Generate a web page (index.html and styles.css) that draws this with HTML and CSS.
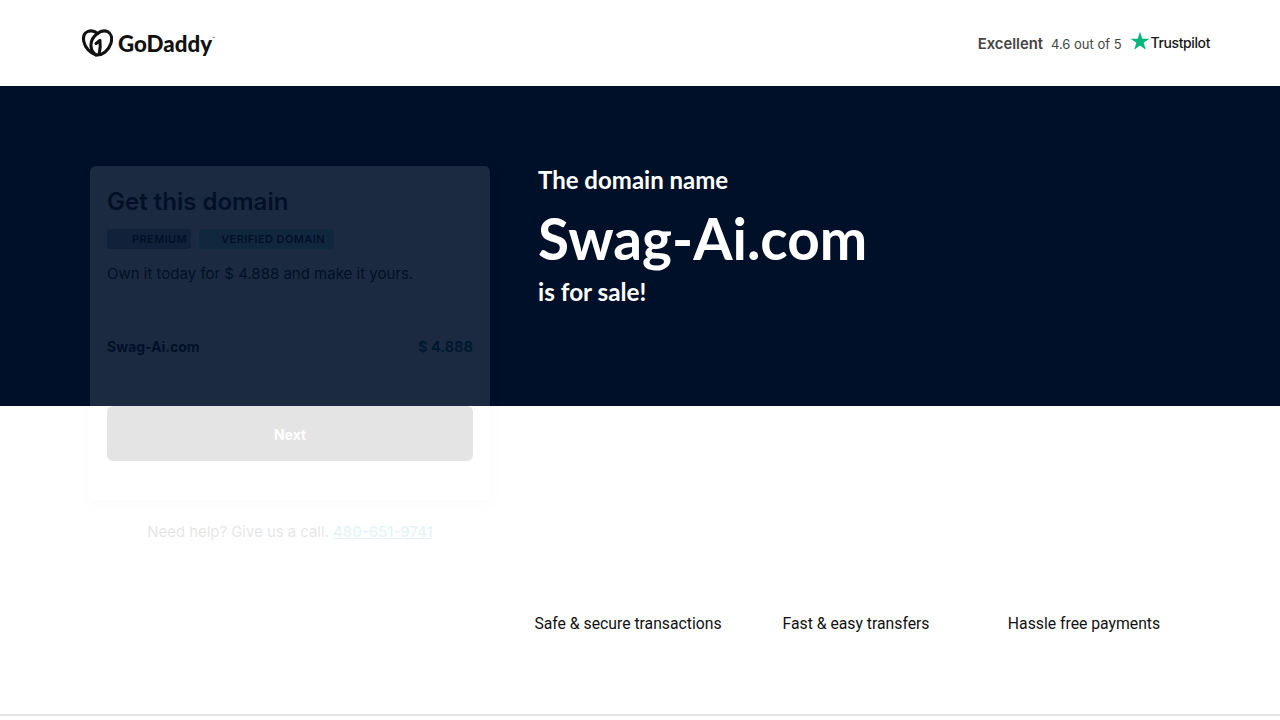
FILE: index.html
```html
<!DOCTYPE html>
<html lang="en">
<head>
    <meta charset="UTF-8">
    <meta name="viewport" content="width=device-width, initial-scale=1.0">
    <title>Swag-Ai.com is for sale</title>
    <link rel="stylesheet" href="styles.css">
</head>
<body>
    <header class="site-header">
        <a class="logo" href="#">
            <svg class="logo-mark" viewBox="0 0 32 28" width="31" height="28" fill="none" stroke="#111" stroke-width="3.2" stroke-linecap="round" stroke-linejoin="round">
                <path d="M16 4.200C13.500 2 9.500 .9 6.300 2 2.200 3.500 .9 8 2 13c1.200 5.500 6 11.500 12.500 13.300C21.500 27 27.500 21.500 29.800 14.500 31.400 9 30.300 4 26.500 2.200 23 .8 19 1.800 16 4.200z"/>
                <path d="M16 4.200C11.500 7.500 8.800 12.500 9.300 17.500c.4 4 2.700 7.200 5.200 8.800"/>
                <path d="M14.500 14.500l4-3.200c.6 4 .6 8.500-.8 14"/>
            </svg>
            <span class="logo-text">GoDaddy</span><span class="logo-tm">™</span>
        </a>
        <div class="rating">
            <span class="rating-word">Excellent</span>
            <span class="rating-score">4.6 out of 5</span>
            <span class="trustpilot">
                <svg viewBox="0 0 24 24" width="20" height="20"><path fill="#00b67a" d="M12 1l2.700 8.200h8.600l-7 5 2.700 8.300-7-5.100-7 5.100 2.700-8.300-7-5h8.600z"/></svg>
                <span class="trustpilot-text">Trustpilot</span>
            </span>
        </div>
    </header>

    <section class="hero">
        <div class="purchase">
            <div class="card">
                <h2>Get this domain</h2>
                <div class="badges">
                    <span class="badge badge-premium">PREMIUM</span>
                    <span class="badge badge-verified">VERIFIED DOMAIN</span>
                </div>
                <p class="pitch">Own it today for $ 4.888 and make it yours.</p>
                <div class="price-row">
                    <span>Swag-Ai.com</span>
                    <span class="price">$ 4.888</span>
                </div>
                <button class="next">Next</button>
            </div>
            <p class="help">Need help? Give us a call. <a href="#">480-651-9741</a></p>
        </div>
        <div class="headline">
            <p class="lead">The domain name</p>
            <h1>Swag-Ai.com</h1>
            <p class="sale">is for sale!</p>
        </div>
    </section>

    <section class="perks">
        <div class="perk">Safe &amp; secure transactions</div>
        <div class="perk">Fast &amp; easy transfers</div>
        <div class="perk">Hassle free payments</div>
    </section>

    <footer class="site-footer"></footer>
</body>
</html>
```

FILE: styles.css
```css
html, body {
    height: 720px;
    overflow: hidden;
}

body {
    margin: 0;
    background: #fff;
    font-family: Roboto, Arial, sans-serif;
    color: #111;
}

.site-header {
    height: 86px;
    box-sizing: border-box;
    padding: 0 70px 0 82px;
    display: flex;
    justify-content: space-between;
    align-items: center;
}

.logo {
    display: flex;
    align-items: center;
    gap: 5px;
    color: #111;
    text-decoration: none;
}

.logo-text {
    font-family: Lato, sans-serif;
    font-weight: 900;
    font-size: 22.3px;
}

.logo-tm {
    font-size: 5px;
    margin: -10px 0 0 -5px;
}

.rating {
    display: flex;
    align-items: center;
    font-family: Inter, sans-serif;
    font-size: 13px;
    color: #444;
    padding-top: 2px;
}

.rating-word {
    font-weight: 600;
    font-size: 14.8px;
    margin-right: 8px;
}

.rating-score {
    margin-right: 8px;
}

.trustpilot {
    display: flex;
    align-items: center;
    gap: 1px;
    margin-top: -6px;
}

.trustpilot-text {
    font-weight: 500;
    font-size: 14px;
    letter-spacing: -0.4px;
    color: #191919;
    margin-top: 2px;
}

.hero {
    height: 320px;
    box-sizing: border-box;
    padding: 80px 0 0 90px;
    background: #001029;
    display: flex;
    gap: 48px;
}

.purchase {
    width: 400px;
    flex: none;
    opacity: 0.105;
}

.card {
    height: 334px;
    box-sizing: border-box;
    padding: 20px 17px;
    background: #fff;
    border-radius: 6px;
    box-shadow: 0 3px 10px rgba(0, 0, 0, 0.15);
    font-family: Inter, sans-serif;
}

.card h2 {
    margin: 0;
    font-size: 24px;
    line-height: 32px;
    font-weight: 600;
}

.badges {
    display: flex;
    gap: 8px;
    margin-top: 11px;
}

.badge {
    height: 20px;
    box-sizing: border-box;
    font-size: 11px;
    font-weight: 600;
    line-height: 20px;
    letter-spacing: 0.4px;
    border-radius: 3px;
}

.badge-premium {
    padding: 0 4px 0 25px;
    background: #a3adbd;
}

.badge-verified {
    padding: 0 9px 0 22px;
    background: #9fe8ee;
}

.pitch {
    margin: 14px 0 0;
    font-size: 15px;
    line-height: 22px;
}

.price-row {
    display: flex;
    justify-content: space-between;
    margin-top: 52px;
    font-size: 14px;
    line-height: 20px;
    font-weight: 700;
}

.price {
    color: #00666b;
    font-size: 14.5px;
}

.next {
    display: block;
    width: 100%;
    height: 55px;
    margin-top: 49px;
    padding-top: 3px;
    border: none;
    border-radius: 6px;
    background: #111;
    color: #fff;
    font-family: inherit;
    font-size: 14px;
    font-weight: 700;
}

.help {
    margin: 22px 0 0;
    text-align: center;
    font-family: Inter, sans-serif;
    font-size: 14.9px;
    line-height: 20px;
}

.help a {
    color: #00a3ad;
    font-weight: 500;
}

.headline {
    color: #fff;
    font-family: Lato, sans-serif;
    font-weight: 700;
}

.lead {
    margin: 0;
    font-size: 24px;
    line-height: 28px;
}

.headline h1 {
    margin: 10px 0 0;
    font-size: 56.7px;
    line-height: 68px;
    font-weight: 700;
}

.sale {
    margin: 5px 0 0;
    font-size: 24.3px;
    line-height: 30px;
}

.perks {
    display: grid;
    grid-template-columns: repeat(3, 228px);
    margin: 208px 0 0 514px;
    font-size: 15.75px;
    line-height: 20px;
    text-align: center;
}

.site-footer {
    margin-top: 80px;
    height: 10px;
    border-top: 2px solid #e4e4e4;
}
```
